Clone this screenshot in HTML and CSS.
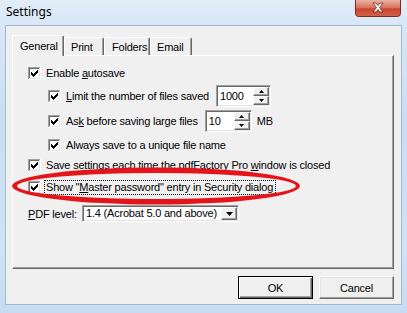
FILE: index.html
```html
<!DOCTYPE html>
<html>
<head>
<meta charset="utf-8">
<title>Settings</title>
<link rel="stylesheet" href="styles.css">
</head>
<body>
<svg class="defs" width="0" height="0">
  <symbol id="chk" viewBox="0 0 13 13">
    <rect x="0" y="0" width="13" height="13" fill="#ffffff"/>
    <rect x="0" y="0" width="12" height="1" fill="#a0a0a0"/>
    <rect x="0" y="0" width="1" height="12" fill="#a0a0a0"/>
    <rect x="1" y="1" width="10" height="1" fill="#696969"/>
    <rect x="1" y="1" width="1" height="10" fill="#696969"/>
    <rect x="1" y="11" width="11" height="1" fill="#e3e3e3"/>
    <rect x="11" y="1" width="1" height="11" fill="#e3e3e3"/>
    <g fill="#000">
      <rect x="3" y="5" width="1" height="3"/>
      <rect x="4" y="6" width="1" height="3"/>
      <rect x="5" y="7" width="1" height="3"/>
      <rect x="6" y="6" width="1" height="3"/>
      <rect x="7" y="5" width="1" height="3"/>
      <rect x="8" y="4" width="1" height="3"/>
      <rect x="9" y="3" width="1" height="3"/>
    </g>
  </symbol>
</svg>
<div class="window">
  <div class="titlebar">
    <span class="title">Settings</span>
    <div class="close">
      <svg width="46" height="17" viewBox="0 0 46 17">
        <defs>
          <linearGradient id="cg" x1="0" y1="0" x2="0" y2="1">
            <stop offset="0" stop-color="#eab3a6"/>
            <stop offset="0.45" stop-color="#d8735d"/>
            <stop offset="0.55" stop-color="#c7452d"/>
            <stop offset="1" stop-color="#d4634a"/>
          </linearGradient>
        </defs>
        <path d="M0.5 0 V13.5 Q0.5 16.5 3.5 16.5 H42.5 Q45.5 16.5 45.5 13.5 V0" fill="url(#cg)" stroke="#7b2a1f"/>
        <path d="M18 3 h3 l2 2.5 l2 -2.5 h3 l-3.5 4.5 l3.5 4.5 h-3 l-2 -2.5 l-2 2.5 h-3 l3.5 -4.5 z" fill="#ffffff" stroke="#5a2a22" stroke-width="0.8"/>
      </svg>
    </div>
  </div>
  <div class="client">
    <div class="tabs">
      <div class="tab active">General</div>
      <div class="tab w-print">Print</div>
      <div class="tab w-folders">Folders</div>
      <div class="tab w-email">Email</div>
    </div>
    <div class="panel">
      <div class="row r1">
        <svg class="cb"><use href="#chk"/></svg>
        <span>Enable <u>a</u>utosave</span>
      </div>
      <div class="row tall r2 indent">
        <svg class="cb"><use href="#chk"/></svg>
        <span><u>L</u>imit the number of files saved</span>
        <div class="spin w1000">
          <span class="val">1000</span>
          <div class="spinbtns">
            <div class="sbtn"><svg width="5" height="3"><polygon points="2.5,0 5,3 0,3" fill="#000"/></svg></div>
            <div class="sbtn"><svg width="5" height="3"><polygon points="0,0 5,0 2.5,3" fill="#000"/></svg></div>
          </div>
        </div>
      </div>
      <div class="row tall r3 indent">
        <svg class="cb"><use href="#chk"/></svg>
        <span>As<u>k</u> before saving large files</span>
        <div class="spin w10">
          <span class="val">10</span>
          <div class="spinbtns">
            <div class="sbtn"><svg width="5" height="3"><polygon points="2.5,0 5,3 0,3" fill="#000"/></svg></div>
            <div class="sbtn"><svg width="5" height="3"><polygon points="0,0 5,0 2.5,3" fill="#000"/></svg></div>
          </div>
        </div>
        <span class="unit">MB</span>
      </div>
      <div class="row r4 indent">
        <svg class="cb"><use href="#chk"/></svg>
        <span>Always save to a unique file name</span>
      </div>
      <div class="row r5">
        <svg class="cb"><use href="#chk"/></svg>
        <span>Save settings each time the pdfFactory Pro <u>w</u>indow is closed</span>
      </div>
      <div class="row r6">
        <svg class="cb"><use href="#chk"/></svg>
        <span class="focus">Show "<u>M</u>aster password" entry in Security dialog</span>
      </div>
      <div class="row r7">
        <span class="lbl"><u>P</u>DF level:</span>
        <div class="combo">
          <span class="val">1.4 (Acrobat 5.0 and above)</span>
          <div class="dd"><svg width="7" height="4"><polygon points="0,0 7,0 3.5,4" fill="#000"/></svg></div>
        </div>
      </div>
    </div>
    <div class="buttons">
      <div class="btn default">OK</div>
      <div class="btn">Cancel</div>
    </div>
  </div>
  <svg class="annot" width="407" height="313" viewBox="0 0 407 313">
    <path fill="#e5141b" fill-rule="evenodd" d="M12 186 A144 18.5 0 1 0 300 186 A144 18.5 0 1 0 12 186 Z M17 186 A139.5 13 0 1 0 296 186 A139.5 13 0 1 0 17 186 Z"/>
  </svg>
</div>
</body>
</html>
```
FILE: styles.css
```css
body {
  margin: 0;
  width: 407px;
  height: 313px;
  overflow: hidden;
  font-family: "Liberation Sans", Arial, sans-serif;
  font-size: 11px;
  letter-spacing: -0.2px;
  color: #000;
}

.defs {
  position: absolute;
  width: 0;
  height: 0;
}

.window {
  position: relative;
  width: 407px;
  height: 313px;
  background:
    linear-gradient(180deg, #e2edf8 0px, #d8e7f6 25px, #c9def4 120px, #cfe2f6 250px, #c6dcf3 313px);
  display: flex;
  flex-direction: column;
}

.titlebar {
  height: 25px;
  display: flex;
  justify-content: space-between;
  align-items: flex-start;
  flex: none;
}

.title {
  margin: 4px 0 0 6px;
  font-family: "Segoe UI", "Noto Sans", sans-serif;
  font-size: 12px;
  line-height: 16px;
  letter-spacing: 0;
  color: #000;
}

.close {
  width: 46px;
  height: 17px;
  margin-right: 6px;
}

.close svg {
  display: block;
}

.client {
  margin: 0 5px;
  height: 280px;
  box-sizing: border-box;
  border: 1px solid #a6b8cc;
  background: #f0f0f0;
  padding: 9px 7px 0 6px;
  display: flex;
  flex-direction: column;
}

.tabs {
  display: flex;
  align-items: flex-end;
  height: 20px;
  position: relative;
  z-index: 2;
}

.tab {
  box-sizing: border-box;
  height: 18px;
  padding: 2px 0 0 6px;
  line-height: 14px;
  background: #f0f0f0;
  border-top: 1px solid #ffffff;
  border-left: 1px solid #ffffff;
  border-right: 1px solid #696969;
  box-shadow: inset -1px 0 0 #a0a0a0;
  border-radius: 2px 2px 0 0;
}

.tab.active {
  width: 52px;
  height: 21px;
  margin-bottom: -1px;
  padding: 3px 0 0 7px;
}

.w-print { width: 40px; }
.w-folders { width: 46px; padding-left: 7px; }
.w-email { width: 42px; padding-left: 6px; }

.panel {
  box-sizing: border-box;
  width: 382px;
  height: 214px;
  border-top: 1px solid #ffffff;
  border-left: 1px solid #ffffff;
  border-right: 1px solid #696969;
  border-bottom: 1px solid #696969;
  box-shadow: inset -1px -1px 0 #a0a0a0;
  padding: 9px 0 0 15px;
  display: flex;
  flex-direction: column;
}

.row {
  display: flex;
  align-items: center;
  height: 16px;
  flex: none;
  white-space: nowrap;
}

.row.tall { height: 22px; }
.indent { margin-left: 20px; }

.r2 { margin-top: 4px; }
.r3 { margin-top: 3px; }
.r4 { margin-top: 5px; }
.r5 { margin-top: 4px; }
.r6 { margin-top: 6px; }
.r7 { margin-top: 10px; height: 17px; }

.cb {
  width: 13px;
  height: 13px;
  flex: none;
  margin-right: 5px;
  display: block;
}

u {
  text-decoration: underline;
  text-underline-offset: 1px;
}

.spin, .combo {
  box-sizing: border-box;
  display: flex;
  align-items: center;
  justify-content: space-between;
  background: #fff;
  border: 1px solid;
  border-color: #a0a0a0 #ffffff #ffffff #a0a0a0;
  box-shadow: inset 1px 1px 0 #696969, inset -1px -1px 0 #e3e3e3;
  padding: 1px;
}

.spin {
  height: 22px;
  margin-left: 7px;
}

.w1000 { width: 55px; }
.w10 { width: 47px; }

.spin .val {
  padding-left: 2px;
  line-height: 14px;
}

.spinbtns {
  display: flex;
  flex-direction: column;
  align-self: stretch;
  width: 16px;
}

.sbtn, .dd {
  box-sizing: border-box;
  flex: 1;
  background: #f0f0f0;
  border: 1px solid;
  border-color: #ffffff #696969 #696969 #ffffff;
  box-shadow: inset -1px -1px 0 #a0a0a0;
  display: flex;
  align-items: center;
  justify-content: center;
}

.sbtn svg, .dd svg {
  display: block;
}

.unit {
  margin-left: 5px;
}

.focus {
  outline: 1px dotted #000;
  outline-offset: 0;
  line-height: 13px;
  margin-left: -1px;
  padding: 0 2px 0 1px;
}

.lbl {
  width: 54px;
}

.combo {
  width: 157px;
  height: 17px;
  padding: 1px;
}

.combo .val {
  padding-left: 2px;
  line-height: 13px;
}

.dd {
  flex: none;
  width: 16px;
  align-self: stretch;
}

.buttons {
  display: flex;
  justify-content: flex-end;
  gap: 6px;
  margin-top: 7px;
}

.btn {
  box-sizing: border-box;
  width: 75px;
  height: 23px;
  display: flex;
  align-items: center;
  justify-content: center;
  background: #f0f0f0;
  border: 1px solid;
  border-color: #ffffff #696969 #696969 #ffffff;
  box-shadow: inset -1px -1px 0 #a0a0a0, inset 1px 1px 0 #e3e3e3;
}

.btn.default {
  border: 1px solid #000;
  box-shadow: inset 1px 1px 0 #ffffff, inset -1px -1px 0 #696969, inset -2px -2px 0 #a0a0a0;
}

.annot {
  position: absolute;
  left: 0;
  top: 0;
  pointer-events: none;
}
```
